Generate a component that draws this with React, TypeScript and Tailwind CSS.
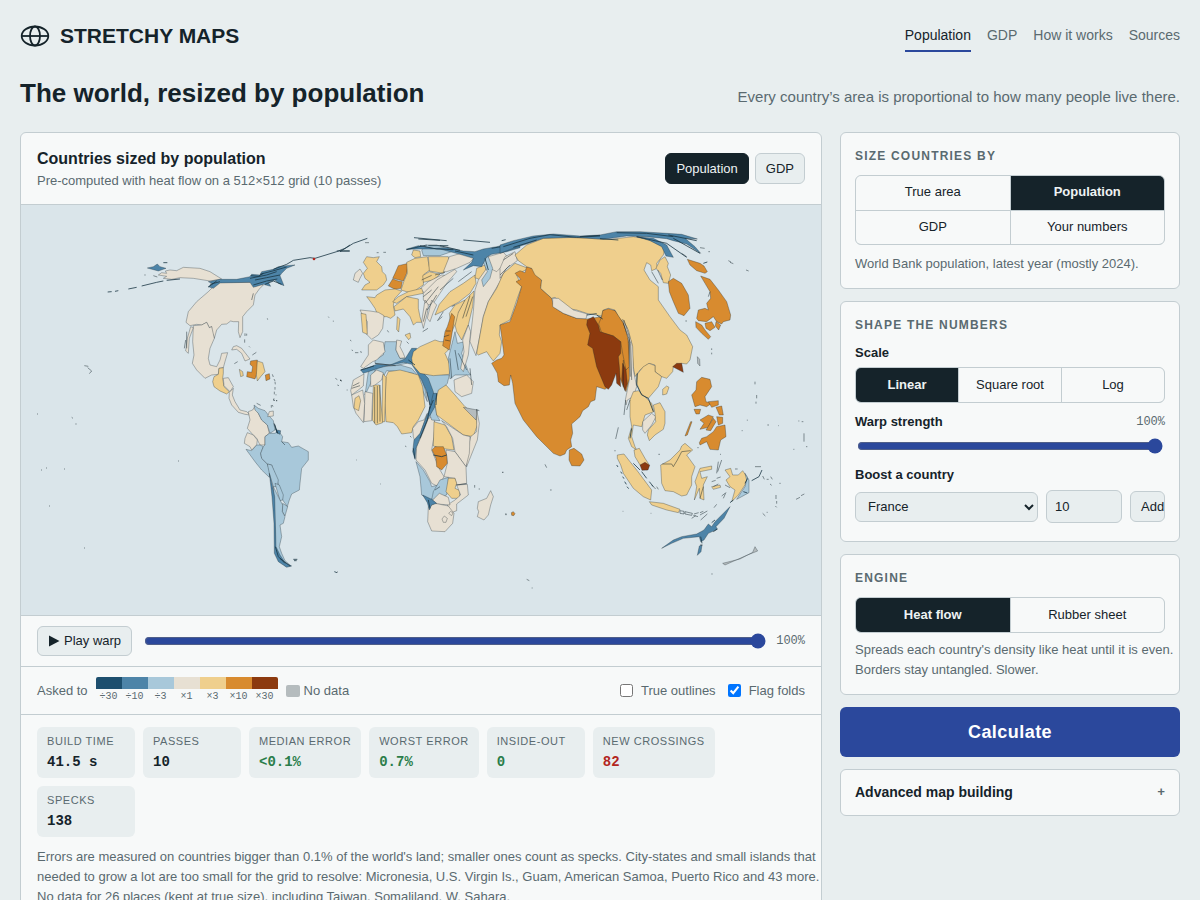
import { Fragment, useState } from "react";
import type { ReactNode } from "react";

const TONE = {
  deep: "#1d4f6e",
  blue: "#4d84a8",
  sky: "#a8c8da",
  bone: "#e7e0d3",
  sand: "#efcf8d",
  ochre: "#d88b2f",
  rust: "#8c3a0f",
  none: "#b5bcbe",
  dark: "#1b3644",
};

type Shape = [keyof typeof TONE, string];
type Region = { at: string; shapes: Shape[]; specks?: string; lines?: string };

/* Each region has its own origin and is drawn at three units to the pixel. */
const regions: Region[] = [
  {
    at: "translate(20 225) scale(.33333)",
    shapes: [
      ["bone", "M415 150L425 143 440 145 436 138 450 135 470 137 490 127 540 130 570 140 605 162 570 168 520 160 480 158 455 163 430 160 440 154Z"],
      ["blue", "M382 129L400 125 412 117 420 125 438 130 415 138Z"],
      ["bone", "M595 170L640 172 690 172 730 180 718 192 705 210 700 240 680 260 668 275 668 320 660 338 655 320 656 290 640 290 632 288 620 297 605 298 590 315 583 340 575 318 575 305 568 308 560 292 545 300 530 298 510 302 498 292 505 260 530 230 565 200Z"],
      ["bone", "M520 302L545 300 560 292 568 308 575 305 583 340 570 370 565 400 570 420 590 425 600 405 605 385 623 383 615 410 610 428 597 430 595 448 575 450 555 460 530 435 517 415 522 390 518 350Z"],
      ["bone", "M512 305L520 308 508 340 505 385 497 378 502 340Z"],
      ["sand", "M597 430L610 428 610 445 608 460 612 485 628 500 620 507 600 498 582 485 578 470 582 455 595 448Z"],
      ["bone", "M610 460L625 458 640 485 630 500 612 482Z"],
      ["bone", "M628 502L640 490 637 510 645 530 660 555 680 560 690 570 675 568 655 562 635 540 627 520Z"],
      ["bone", "M635 375L640 365 650 362 665 370 690 402 675 408 665 385 650 373Z"],
      ["sand", "M658 433L668 440 670 452 662 455Z"],
      ["ochre", "M692 408L712 405 713 440 705 462 680 455 682 440 695 442 698 425 690 418Z"],
      ["sand", "M712 408L728 413 735 440 722 455 712 468 709 450Z"],
      ["ochre", "M736 450L748 446 750 462 738 467Z"],
      ["blue", "M565 170L600 163 650 163 690 155 695 148 720 150 725 140 760 133 775 125 800 122 825 120 800 130 785 145 780 152 792 182 775 175 765 165 745 172 752 184 730 178 700 187 690 172 640 173 600 174 580 190 565 185 578 176Z"],
    ],
    specks:
      "M690 160L740 150 770 140M700 180L740 168 772 162M705 165L740 158 780 150M720 148L765 136 800 126M570 178L600 170M565 186L590 168M735 178L760 168 785 178M692 152L715 154 730 145M430 113h12M480 162L440 166M430 168L410 172 365 183M350 187L325 192M295 197l-10 2M275 200l-12 1M760 133L800 118 820 106 870 98 885 100 950 80 975 70 990 60M950 78h40",
    lines:
      "M193 422l12 2M203 428l12 10-7 8M155 577l4 3M168 595v4M675 325v8M680 326v6M674 343v10M687 364l3 3M697 390l12-8M643 416l10-6M742 280l1 4M925 275l2 3M940 287v3M946 460l6 4M960 465l5 3M952 480l5 2M757 448l3 8M762 462l3 6M765 470l1 8M765 486v8M763 500v8M768 508v3M762 520l-1 8M768 527h3M754 540v8M373 150h4M400 152l12 4M500 320v50M497 345l-4 25M700 205l-5 20",
  },
  {
    at: "translate(340 225) scale(.33333)",
    shapes: [
      ["sky", "M85 440L105 428 180 420 215 430 245 465 255 490 262 530 245 490 220 445 180 440 140 437 130 455 105 435 90 480 75 510Z"],
      ["sky", "M240 447L328 450 322 475 300 500 290 545 268 560 270 500Z"],
      ["sky", "M135 350L170 350 168 375 180 400 200 400 200 415 165 422 105 415 105 405 130 390Z"],
      ["bone", "M85 360L100 345 130 352 135 380 110 405 98 410 70 430 62 425 75 405 85 390Z"],
      ["bone", "M170 345L185 348 180 365 190 385 195 398 180 400 168 375Z"],
      ["blue", "M62 435L80 430 110 418 150 420 195 402 215 370 230 370 220 400 235 430 265 460 280 500 285 540 270 540 260 500 245 465 215 418 190 412 130 425 100 435 70 445Z"],
      ["sand", "M215 400L220 380 240 365 285 345 300 350 318 350 325 375 315 385 330 420 328 448 280 452 240 445 218 420Z"],
      ["sand", "M70 112L80 95 100 98 118 95 110 110 125 125 127 140 137 150 140 165 130 180 110 195 65 195 75 180 90 172 75 160 70 145 82 130Z"],
      ["bone", "M45 145L60 132 68 145 60 160 55 172 40 165Z"],
      ["ochre", "M158 160L165 145 175 122 205 115 200 145 190 168Z"],
      ["ochre", "M145 183L158 162 175 168 187 170 183 190 165 193Z"],
      ["sand", "M80 215L105 218 110 210 135 195 165 192 185 198 165 220 160 240 165 270 152 280 140 275 115 275 105 250 90 228Z"],
      ["sand", "M200 112L225 100 262 95 270 135 252 148 250 180 235 190 215 205 183 195 192 168 202 145Z"],
      ["sand", "M265 95L325 95 328 115 310 145 268 138Z"],
      ["sand", "M248 152L268 140 300 148 280 165 250 172Z"],
      ["bone", "M240 192L265 170 305 150 320 152 290 170 255 205Z"],
      ["sand", "M215 90L220 75 240 78 242 95 225 98Z"],
      ["sky", "M245 75L260 60 290 60 340 78 300 92 250 92Z"],
      ["sand", "M158 230L175 215 205 200 245 190 250 205 200 215 170 235Z"],
      ["sand", "M162 245L200 215 235 222 235 250 240 275 245 292 230 292 220 300 210 275 190 252 165 258Z"],
      ["sand", "M195 330l15-6 2 14-6 6z"],
      ["sand", "M172 275l8 8-4 38-6-8z"],
      ["bone", "M60 255L90 258 115 262 132 272 128 310 115 330 95 343 80 328 82 290 65 265Z"],
      ["sand", "M63 265L78 268 82 328 68 322Z"],
      ["bone", "M328 95L370 83 405 95 390 112 350 130 320 140 310 140Z"],
      ["bone", "M250 205L290 165 345 133 350 140 320 175 300 205 280 235 265 240 250 225Z"],
      ["bone", "M255 225L265 240 262 265 250 310 245 290Z"],
      ["bone", "M275 225L290 240 280 262 270 290 262 280Z"],
      ["sand", "M285 270L298 238 330 200 370 175 405 150 408 175 390 205 355 232 330 245 310 258Z"],
      ["sand", "M350 270L375 225 402 198 398 245 385 300 365 345 350 320 345 300Z"],
      ["sand", "M328 265L345 240 375 225 355 262 347 295 335 320Z"],
      ["ochre", "M322 305L335 265 344 275 337 320 328 375 308 362 315 320Z"],
      ["sand", "M410 130L435 120 440 145 422 165 405 158Z"],
      ["sky", "M325 400L345 320 352 355 375 350 365 385 385 440 392 450 345 450 330 462Z"],
      ["bone", "M385 300L392 320 385 390 370 440 362 430 372 380 368 345Z"],
      ["bone", "M342 465L380 450 400 470 395 505 365 515 345 500Z"],
      ["bone", "M405 195L415 165 440 130 500 125 480 170 445 230 430 275 420 330 408 392 390 350 400 260Z"],
      ["bone", "M445 95L490 82 505 98 490 120 470 140 450 130Z"],
      ["sky", "M425 100L445 95 458 130 450 160 430 185 425 165 442 140Z"],
      ["sand", "M410 385L420 330 430 275 445 230 470 190 490 145 525 115 565 130 530 150 545 185 530 225 510 285 480 300 478 330 485 350 480 385 460 408 450 395 440 380 415 390Z"],
      ["blue", "M198 73L235 62 280 70 320 68 370 78 405 80 430 72 470 65 540 50 540 68 500 80 455 88 440 96 425 125 400 122 370 135 395 112 400 100 360 88 300 72 240 72Z"],
    ],
    specks:
      "M222 38L320 47M235 42L300 46M370 45L450 52M200 74l60-14M300 62l60 14M455 70l80-14M0 80L40 55 82 40M0 78h28M345 78l55 12M265 62l60 0M62 435l40-12M205 405l20 15M240 62L290 72 340 74M435 100l10 35",
    lines:
      "M75 53h12M110 83h6M130 82h8M30 345l4 3M35 375l4 2M45 383h10M60 380l6 2M0 466h4M142 316l4 6M200 350l6 6M250 215l25-20M255 235l40-50M262 255l28-45M250 290l10-40M300 195l40-35M285 150l30-8M245 165l30-14M318 318h14M312 335l16-5M315 345l15 3M295 285l12-10M310 260l-18 28M248 320l16-10M335 245l10-6M330 400l5 60M345 375l10 60M355 385l25 50M390 430l5 50M260 500l10 40M368 280l22-68M378 275l20-60M105 415l62 7M355 170L395 140",
  },
  {
    at: "translate(340 370) scale(.33333)",
    shapes: [
      ["sand", "M138 20L145 5 180 0 200 5 235 15 248 50 255 110 235 150 220 170 215 188 185 192 172 170 160 158 138 155 135 100Z"],
      ["sand", "M128 10L138 22 134 155 126 155Z"],
      ["sand", "M100 45L118 45 122 90 128 158 108 165 97 150Z"],
      ["bone", "M92 15L110 0 130 8 125 30 105 45 92 50Z"],
      ["bone", "M75 65L98 70 95 152 72 155Z"],
      ["bone", "M35 75L68 60 74 100 70 158 48 130 40 110Z"],
      ["sand", "M45 85L57 77 62 92 56 122 42 115Z"],
      ["bone", "M32 62L40 30 72 12 70 48 55 60 35 75Z"],
      ["bone", "M220 200L218 175 235 155 252 150 262 130 245 180 228 225Z"],
      ["bone", "M230 230L250 185 265 145 280 140 285 160 282 200 275 240 285 265 300 300 312 320 295 350 275 340 255 300 228 270Z"],
      ["sky", "M270 135L285 95 290 135 300 152 275 150Z"],
      ["blue", "M218 245L222 210 240 190 255 150 268 120 280 70 290 70 285 110 262 150 240 205 228 235 225 268Z"],
      ["sand", "M285 100L295 60 318 45 345 75 375 110 408 135 412 165 400 200 370 195 310 150 290 135Z"],
      ["none", "M370 112L412 120 408 150Z"],
      ["bone", "M410 120L418 160 412 210 380 290 378 262 392 200 410 185Z"],
      ["sand", "M282 155L315 165 335 200 342 240 300 235 280 228Z"],
      ["bone", "M305 152L370 195 390 200 388 250 378 290 345 245 338 205 320 170Z"],
      ["bone", "M318 240L345 245 378 290 380 340 350 345 345 325 312 320 322 280Z"],
      ["ochre", "M276 240L285 230 310 230 320 255 322 280 305 300 290 290 288 265Z"],
      ["sky", "M228 275L250 300 270 335 275 350 295 345 285 380 270 390 245 375 240 320Z"],
      ["sky", "M300 330L325 322 325 345 320 375 275 390 280 365Z"],
      ["sand", "M325 325L345 325 350 340 345 355 360 362 358 385 335 385 318 365Z"],
      ["bone", "M350 345L382 343 385 375 350 402 350 422 335 428 322 405 345 390 362 375Z"],
      ["bone", "M278 390L298 370 325 382 330 405 290 402Z"],
      ["bone", "M265 410L285 400 325 408 342 430 338 460 315 485 275 483 263 455Z"],
      ["blue", "M248 375L275 388 290 400 275 405 268 420 262 398Z"],
      ["bone", "M306 447L313 438 322 445 318 457 310 457Z"],
      ["bone", "M326 430L332 424 339 429 335 437Z"],
      ["bone", "M412 415L415 395 440 385 452 362 460 380 452 405 445 435 432 450 412 440 416 425Z"],
      ["ochre", "M514 428L520 425 525 431 521 437 515 436Z"],
    ],
    specks: "M290 70l-2 35M270 110L262 150 240 205M220 235L225 265M265 390l5 25M280 255l25 5 15-5M268 118L280 90",
    lines:
      "M0 30l5 3M195 228l4 2M210 198l4 4M404 345v8M416 357h4M487 307h3M496 434h4M48 270h2M120 342h2M408 118l10 4M35 55l25-8M38 48l20-10M104 50v110M112 48v112M120 45v110M350 345l30-4M285 360l15-10",
  },
  {
    at: "translate(230 390) scale(.33333)",
    shapes: [
      ["bone", "M55 65L68 60 75 48 85 70 95 90 112 105 118 130 105 140 105 165 90 165 80 145 65 130 52 115 60 90Z"],
      ["sky", "M72 45L85 55 105 62 115 75 130 92 135 120 120 130 112 105 95 90 85 70 75 60Z"],
      ["bone", "M45 145L52 128 70 135 82 150 80 165 65 180 60 170 43 160Z"],
      ["sky", "M48 178L65 182 80 165 90 165 100 170 92 190 95 205 112 222 120 245 118 262 95 240 75 215Z"],
      ["sky", "M105 140L118 130 135 130 145 122 158 140 155 155 175 158 185 172 205 168 235 185 235 210 215 235 210 280 208 300 185 312 178 330 172 350 158 330 150 295 140 270 125 225 112 222 95 205 92 190 100 170 105 165Z"],
      ["sky", "M112 222L125 225 145 270 142 290 130 290 118 250Z"],
      ["sky", "M135 280L148 285 160 315 158 330 150 332Z"],
      ["sky", "M158 340L173 350 165 378 157 365Z"],
      ["sky", "M130 290L150 330 158 345 157 365 165 380 160 400 150 405 155 440 148 470 155 490 165 512 183 528 165 528 145 505 137 480 134 400Z"],
      ["blue", "M118 250L128 290 134 320 138 470 150 495 165 518 185 528 170 532 145 515 133 490 132 400 126 320Z"],
      ["bone", "M118 65L130 63 130 78 113 80Z"],
      ["blue", "M132 100L140 120 152 122 150 133 140 128Z"],
    ],
    specks: "M134 103L142 130M138 118l6 12M190 508h12M192 512h8M136 470L145 500 165 520M150 505L180 528M313 545l8 3",
    lines: "M130 28l5 5M138 32h4M127 45l2 5M80 40l12 6M155 155l10 10M350 0h3",
  },
  {
    at: "translate(500 220) scale(.33333)",
    shapes: [
      ["bone", "M0 145L15 110 45 95 52 122 20 145 0 175Z"],
      ["ochre", "M45 160L60 152 75 158 80 140 95 145 105 150 108 165 125 180 122 205 155 235 162 262 190 280 230 295 262 297 305 290 310 270 345 272 370 310 385 350 390 470 378 515 370 500 350 450 325 500 315 508 290 500 285 540 272 545 265 560 248 572 240 590 215 612 218 640 212 660 215 680 200 690 195 702 180 708 160 700 110 650 70 600 45 550 38 490 32 465 28 495 12 497 -5 485 -8 460 -25 430 -10 420 5 415 12 405 5 350 0 315 30 305 50 250 65 200 48 185 62 178Z"],
      ["sand", "M45 105L80 75 130 55 200 52 330 58 400 50 440 57 480 70 495 85 490 105 470 130 472 145 455 152 452 135 440 128 432 150 450 180 475 200 475 240 510 290 540 330 560 345 578 380 570 420 560 432 545 430 520 440 518 455 500 475 485 470 465 455 465 435 447 430 420 450 405 470 400 440 395 370 380 320 355 290 345 270 325 265 310 270 305 288 260 280 230 270 200 265 165 232 155 235 122 205 125 180 105 165 95 145 80 140 55 122Z"],
      ["bone", "M158 235L175 235 220 270 262 282 258 296 230 295 190 280 158 260Z"],
      ["ochre", "M308 272L325 266 345 272 370 310 384 350 388 440 378 450 368 400 362 365 340 348 305 338 296 312 305 290Z"],
      ["rust", "M262 300L280 290 295 315 300 335 340 348 362 365 362 400 355 410 358 440 362 500 350 490 348 460 335 495 325 508 315 500 290 440 278 385 263 375 270 340 260 315Z"],
      ["rust", "M368 430L378 450 382 490 375 512 365 480Z"],
      ["bone", "M368 298L385 330 398 380 400 450 410 500 400 530 382 540 378 555 376 540 388 480 388 370Z"],
      ["sand", "M410 465L430 440 447 430 465 437 465 455 485 470 475 500 445 535 425 525 410 490Z"],
      ["sand", "M488 508L500 498 507 502 500 522 488 525Z"],
      ["rust", "M518 440L530 430 545 430 550 457Z"],
      ["sand", "M468 145L480 120 495 110 505 130 502 140 512 165 505 190 490 188 482 160Z"],
      ["ochre", "M505 185L520 175 545 190 565 225 570 265 552 287 535 280 520 245 508 215Z"],
      ["ochre", "M562 118L600 130 612 138 622 155 615 160 590 152 570 135Z"],
      ["ochre", "M602 168L630 178 655 210 680 245 692 285 690 300 670 305 665 312 650 305 640 290 620 305 595 302 590 295 595 270 615 265 625 270 620 250 632 235 630 215 615 190Z"],
      ["ochre", "M587 305L605 315 615 330 632 350 625 358 605 340 588 322Z"],
      ["ochre", "M615 310L635 305 645 322 630 332 618 325Z"],
      ["ochre", "M648 305l14 10-6 15-10-12z"],
      ["blue", "M0 75L40 62 100 48 160 42 240 48 300 45 350 35 420 35 500 40 545 43 592 57 555 55 585 80 602 100 560 72 520 62 500 56 440 50 380 48 310 58 230 52 130 55 80 72 40 85 0 100Z"],
      ["blue", "M410 50L460 55 500 75 520 112 498 108 485 80 450 62Z"],
      ["none", "M592 410l7 8 1 20-7-8z"],
    ],
    specks:
      "M10 80L90 55 150 44M40 82L110 60M150 44L230 52 300 48M300 56L355 60M350 38L440 40 520 50M410 50L500 70 560 112M5 62l12-3M505 45L590 62M520 55L600 100M610 130l12-4M260 285l30-4M290 285l18 12M240 50L300 46",
    lines:
      "M600 83l14 2M685 122l8 4M690 127l10 4M738 150l8 3M625 95h5M630 215l-5 15M556 303h5M635 385v5M635 398v5M370 310L392 370 395 480M372 300L388 350 391 470M370 420v80M455 155l20 35M473 150l14 30M545 100l15 10M0 165l30-30M10 120l30-20",
  },
  {
    at: "translate(500 370) scale(.33333)",
    shapes: [
      ["ochre", "M208 240L222 235 245 252 252 270 240 288 215 287 207 270Z"],
      ["sand", "M390 90L400 65 415 62 440 85 455 100 462 125 435 135 425 170 400 165 395 200 405 230 410 240 395 230 385 205 395 170 390 140Z"],
      ["bone", "M428 155L455 130 468 140 455 165 435 190 428 180Z"],
      ["sand", "M460 105L480 98 495 125 495 160 490 178 465 195 448 212 442 195 445 180 467 155 465 130Z"],
      ["sand", "M402 240L418 235 435 265 448 285 440 300 420 285 405 260Z"],
      ["rust", "M420 285L435 277 449 286 444 300 426 301Z"],
      ["sand", "M352 255L372 252 390 275 410 300 440 340 455 360 452 390 430 380 400 355 370 310 362 285 352 265Z"],
      ["sand", "M448 395L490 400 540 418 535 428 500 420 455 405Z"],
      ["sand", "M482 285L495 278 510 270 540 240 545 228 555 220 578 240 560 255 585 290 575 320 575 345 560 375 545 378 520 365 495 362 485 340Z"],
      ["sand", "M583 390L590 350 585 335 600 295 635 288 635 298 600 305 605 325 622 320 610 345 612 390 600 385 598 355Z"],
      ["ochre", "M590 35L605 22 630 28 635 50 615 80 618 95 635 100 620 110 600 105 585 110 575 75 588 60Z"],
      ["ochre", "M582 118L602 118 598 132 588 132Z"],
      ["ochre", "M625 95L655 92 655 105 635 112Z"],
      ["ochre", "M648 112L665 108 670 135 658 135Z"],
      ["ochre", "M600 150L625 135 640 140 625 172 600 178 612 160Z"],
      ["ochre", "M640 145L648 155 632 182 618 180Z"],
      ["ochre", "M650 140L668 142 668 160 655 165Z"],
      ["ochre", "M598 218L605 205 620 200 640 185 650 170 675 165 678 200 662 210 655 240 630 238 620 215 600 225Z"],
      ["ochre", "M572 155L576 155 562 195 555 198Z"],
      ["sand", "M675 300L692 295 698 315 715 315 728 302 742 322 735 345 715 375 695 395 705 360 690 350 678 330 690 320Z"],
      ["sky", "M735 310L747 330 747 368 725 380 710 388 735 350 740 330Z"],
      ["sand", "M635 350L660 345 662 352 640 358Z"],
      ["blue", "M485 535L520 510 545 500 590 492 612 480 625 462 635 470 645 455 690 410 672 445 648 470 652 478 625 490 612 510 602 515 598 500 550 505 515 520Z"],
      ["blue", "M598 528L606 525 603 545 592 556Z"],
      ["none", "M668 580L720 567 758 547 765 530 773 543 740 556 675 585Z"],
    ],
    specks:
      "M412 10L410 45 425 75 445 85 460 125M350 285l4 6M362 305l4 6M368 320l4 6M374 335l5 8M381 350l5 6M400 280L420 300M425 305L440 325M448 335l12 15M395 175l-5 30M635 458l10-8M640 485l12-8M602 500l4 20M690 398l10-8M755 332l22-12 9-20M730 365l12 4M735 340l8-15",
    lines:
      "M355 172l-8 35M345 240v4M475 253h5M487 282L515 282 520 290 532 270 545 245 572 242M655 275l-5 35M665 270l-12 35M650 325l12-4M635 335l12-4M670 385l8-18M665 378l10-8M650 403l-8 10M675 345l15 8M705 297h8M765 290h18M788 318l5 10M800 328h6M812 320l5 8M810 342l5 4M838 340h4M828 375v12M830 393v8M826 408l4 4M888 388l12-6M903 377l10-5M788 430l8 8M800 427h3M765 35v8M770 75v10M768 95v6M742 149v3M725 182h3M802 165h5M835 167h2M895 153h3M905 155h5M912 190v25M918 230h4M880 238h3M660 253h3M592 233h4M452 430h2M368 424h2M6 307h4M135 283l5 10M150 360h5M15 432h5M80 628l8 4M95 654h3M634 612h4M377 90l-5 45M390 90l-10 30M640 350l15-8M455 345l12 12M470 350l5 8M600 385l10-35M600 525h8M540 422l12 2 0 8-12-2zM555 425l22 5-2 6-20-4zM582 432l14-4M580 436l14 4M575 445l12-8M600 435l22-12M602 450l20-18M600 428l10-4",
  },
];

const islets = [[41, 470], [46, 468], [64, 469], [37, 414], [178, 461], [84, 548], [337, 572], [49, 506]];

function WorldMap() {
  return (
    <svg viewBox="21 205 800 410" className="block h-auto w-full bg-[#dae5ea]" role="img" aria-label="World cartogram">
      {regions.map((region) => (
        <g key={region.at} transform={region.at} strokeLinejoin="round">
          {region.shapes.map(([tone, d]) => (
            <path key={d} d={d} fill={TONE[tone]} stroke="#15232a" strokeOpacity=".55" strokeWidth="1.7" />
          ))}
          <path d={region.lines} fill="none" stroke="#15232a" strokeOpacity=".6" strokeWidth="2.4" />
          <path d={region.specks} fill="none" stroke={TONE.dark} strokeOpacity=".8" strokeWidth="3" />
        </g>
      ))}
      <circle cx="314" cy="259" r="1.3" fill="#b3261e" />
      {islets.map(([x, y]) => (
        <path key={x} d={`M${x} ${y}h1`} stroke="#15232a" strokeOpacity=".5" />
      ))}
    </svg>
  );
}

function Panel({ title, children }: { title: string; children: ReactNode }) {
  return (
    <section className="rounded-md border border-[#c3cdd1] bg-[#f7f9f9] p-3.5">
      <h2 className="mb-2.5 text-[12px] leading-[18px] font-bold tracking-[0.1em] text-[#5a6a70] uppercase">{title}</h2>
      {children}
    </section>
  );
}

type SegmentedProps = { label: string; options: string[]; initial: string; layout: string };

function Segmented({ label, options, initial, layout }: SegmentedProps) {
  const [picked, setPicked] = useState(initial);
  return (
    <div role="group" aria-label={label} className={`grid gap-px overflow-hidden rounded-md border border-[#c3cdd1] bg-[#c3cdd1] ${layout}`}>
      {options.map((option) => (
        <button
          key={option}
          type="button"
          aria-pressed={option === picked}
          onClick={() => setPicked(option)}
          className={`pb-px text-[13px] leading-[18px] ${option === picked ? "bg-[#15232a] font-bold text-[#eef2f3]" : "bg-[#f7f9f9]"}`}
        >
          {option}
        </button>
      ))}
    </div>
  );
}

const legend = [
  ["÷30", "bg-[#1d4f6e]"],
  ["÷10", "bg-[#4d84a8]"],
  ["÷3", "bg-[#a8c8da]"],
  ["×1", "bg-[#e7e0d3]"],
  ["×3", "bg-[#efcf8d]"],
  ["×10", "bg-[#d88b2f]"],
  ["×30", "bg-[#8c3a0f]"],
];

const stats = [
  ["Build time", "41.5 s", "text-[#15232a]"],
  ["Passes", "10", "text-[#15232a]"],
  ["Median error", "<0.1%", "text-[#2a7d4a]"],
  ["Worst error", "0.7%", "text-[#2a7d4a]"],
  ["Inside-out", "0", "text-[#2a7d4a]"],
  ["New crossings", "82", "text-[#b3261e]"],
  ["Specks", "138", "text-[#15232a]"],
];

const mono = "font-['Liberation_Mono',monospace]";

export default function App() {
  return (
    <div className="min-h-screen bg-[#e8eeef] px-5 pb-10 font-['Liberation_Sans',Arial,sans-serif] text-[13px] text-[#15232a]">
      <header className="flex h-[71px] items-center justify-between">
        <a href="#home" className="flex items-center gap-2.5 font-['Liberation_Sans_Narrow','Liberation_Sans',sans-serif] text-[21px] leading-7 font-bold">
          <svg width="30" height="24" viewBox="0 0 30 24" fill="none" stroke="currentColor" strokeWidth="1.8" aria-hidden="true">
            <ellipse cx="15" cy="12" rx="13.3" ry="9.5" />
            <ellipse cx="15" cy="12" rx="5" ry="9.5" />
            <path d="M1.7 12h26.6" />
          </svg>
          STRETCHY MAPS
        </a>
        <nav className="flex gap-4 text-[14px] leading-5 text-[#5a6a70]">
          <a href="#population" aria-current="page" className="border-b-2 border-[#2b489c] py-[5px] text-[#15232a]">Population</a>
          <a href="#gdp" className="py-[5px]">GDP</a>
          <a href="#how" className="py-[5px]">How it works</a>
          <a href="#sources" className="py-[5px]">Sources</a>
        </nav>
      </header>

      <div className="flex h-[61px] items-start justify-between pt-1">
        <h1 className="text-[26px] leading-9 font-bold">The world, resized by population</h1>
        <p className="pt-3 text-[15px] leading-5 text-[#5a6a70]">Every country’s area is proportional to how many people live there.</p>
      </div>

      <div className="grid grid-cols-[minmax(0,1fr)_340px] items-start gap-[18px]">
        <main className="overflow-hidden rounded-md border border-[#c3cdd1] bg-[#f7f9f9]">
          <div className="flex h-[72px] items-center justify-between border-b border-[#c3cdd1] px-4">
            <div>
              <h2 className="text-[16px] leading-6 font-bold">Countries sized by population</h2>
              <p className="text-[13px] leading-5 text-[#5a6a70]">Pre-computed with heat flow on a 512×512 grid (10 passes)</p>
            </div>
            <div className="flex gap-1.5">
              <button type="button" className="h-[31px] rounded-md border border-[#15232a] bg-[#15232a] px-2.5 text-[#eef2f3]">Population</button>
              <button type="button" className="h-[31px] rounded-md border border-[#c3cdd1] bg-[#e8eeef] px-2.5">GDP</button>
            </div>
          </div>

          <WorldMap />

          <div className="flex h-[52px] items-center border-y border-[#c3cdd1] px-4">
            <button type="button" className="flex h-[30px] items-center gap-1 rounded-md border border-[#c3cdd1] bg-[#e8eeef] px-2.5">
              <svg width="12" height="12" viewBox="0 0 12 12" fill="currentColor" aria-hidden="true">
                <path d="M1 .5v11L11.500 6Z" />
              </svg>
              Play warp
            </button>
            <input type="range" aria-label="Warp progress" defaultValue={100} className="mr-2.5 ml-3 h-4 min-w-0 flex-1 accent-[#2b489c]" />
            <output className={`text-[12px] text-[#5a6a70] ${mono}`}>100%</output>
          </div>

          <div className="flex h-12 items-center justify-between border-b border-[#c3cdd1] px-4 text-[13px] text-[#5a6a70]">
            <div className="flex items-center gap-2">
              <span>Asked to</span>
              <div className="grid grid-cols-[repeat(7,26px)] overflow-hidden rounded-xs text-center">
                {legend.map(([label, tone]) => (
                  <div key={label}>
                    <div className={`h-3 ${tone}`} />
                    <div className={`text-[10px] leading-4 ${mono}`}>{label}</div>
                  </div>
                ))}
              </div>
              <span className="flex items-center gap-1">
                <span className="h-3 w-3.5 rounded-xs bg-[#b5bcbe]" />
                No data
              </span>
            </div>
            <div className="flex items-center gap-3">
              <label className="flex items-center gap-2">
                <input type="checkbox" className="size-[13px]" />
                True outlines
              </label>
              <label className="flex items-center gap-2">
                <input type="checkbox" defaultChecked className="size-[13px]" />
                Flag folds
              </label>
            </div>
          </div>

          <div className="pt-3 pb-4 pl-4">
            <dl className="flex flex-wrap gap-2 pr-4">
              {stats.map(([name, value, tone]) => (
                <div key={name} className="min-w-[98px] rounded-md bg-[#e8eeef] px-2.5 pt-1.5 pb-[7px]">
                  <dt className="text-[11px] leading-4 tracking-wider text-[#5a6a70] uppercase">{name}</dt>
                  <dd className={`pt-1 text-[14px] leading-[18px] font-bold ${mono} ${tone}`}>{value}</dd>
                </div>
              ))}
            </dl>
            <p className="mt-2.5 text-[13px] leading-5 text-[#5a6a70]">
              {[
                "Errors are measured on countries bigger than 0.1% of the world's land; smaller ones count as specks. City-states and small islands that",
                "needed to grow a lot are too small for the grid to resolve: Micronesia, U.S. Virgin Is., Guam, American Samoa, Puerto Rico and 43 more.",
                "No data for 26 places (kept at true size), including Taiwan, Somaliland, W. Sahara.",
              ].map((line) => (
                <Fragment key={line}>
                  {line}{" "}
                  <br />
                </Fragment>
              ))}
            </p>
          </div>
        </main>

        <aside className="flex flex-col gap-3">
          <Panel title="Size countries by">
            <Segmented label="Size countries by" options={["True area", "Population", "GDP", "Your numbers"]} initial="Population" layout="h-[70px] grid-cols-2 grid-rows-2" />
            <p className="mt-[9px] text-[13px] leading-5 text-[#5a6a70]">World Bank population, latest year (mostly 2024).</p>
          </Panel>

          <Panel title="Shape the numbers">
            <h3 className="mb-[5px] leading-[18px] font-bold">Scale</h3>
            <Segmented label="Scale" options={["Linear", "Square root", "Log"]} initial="Linear" layout="h-9 grid-cols-3" />
            <div className="mt-2.5 flex items-center justify-between leading-[18px]">
              <label htmlFor="strength" className="font-bold">Warp strength</label>
              <output className={`text-[12px] text-[#5a6a70] ${mono}`}>100%</output>
            </div>
            <div className="flex px-0.5 pt-[7px] pb-1.5">
              <input id="strength" type="range" defaultValue={100} className="h-4 w-full accent-[#2b489c]" />
            </div>
            <label htmlFor="country" className="mt-1.5 mb-1.5 block leading-[18px] font-bold">Boost a country</label>
            <div className="mb-1 grid grid-cols-[minmax(0,1fr)_76px_35px] items-center gap-2">
              <select id="country" className="h-[30px] rounded-md border border-[#c3cdd1] bg-[#e8eeef] px-2">
                <option>France</option>
              </select>
              <input aria-label="Boost factor" defaultValue="10" className="h-[33px] w-full rounded-md border border-[#c3cdd1] bg-[#e8eeef] px-2" />
              <button type="button" className="h-[31px] overflow-hidden rounded-md border border-[#c3cdd1] bg-[#e8eeef] pl-2.5 text-left">Add</button>
            </div>
          </Panel>

          <Panel title="Engine">
            <Segmented label="Engine" options={["Heat flow", "Rubber sheet"]} initial="Heat flow" layout="h-9 grid-cols-2" />
            <p className="-mr-3 mt-[7px] text-[13px] leading-5 text-[#5a6a70]">
              Spreads each country's density like heat until it is even.
              <br />
              Borders stay untangled. Slower.
            </p>
          </Panel>

          <button type="button" className="h-[50px] rounded-md bg-[#2b489c] text-[18px] font-bold tracking-wide text-white">Calculate</button>

          <details className="rounded-md border border-[#c3cdd1] bg-[#f7f9f9]">
            <summary className="flex h-[45px] cursor-pointer list-none items-center justify-between px-3.5 text-[14px] font-bold">
              Advanced map building
              <span className={`text-[13px] text-[#5a6a70] ${mono}`}>+</span>
            </summary>
          </details>
        </aside>
      </div>
    </div>
  );
}
